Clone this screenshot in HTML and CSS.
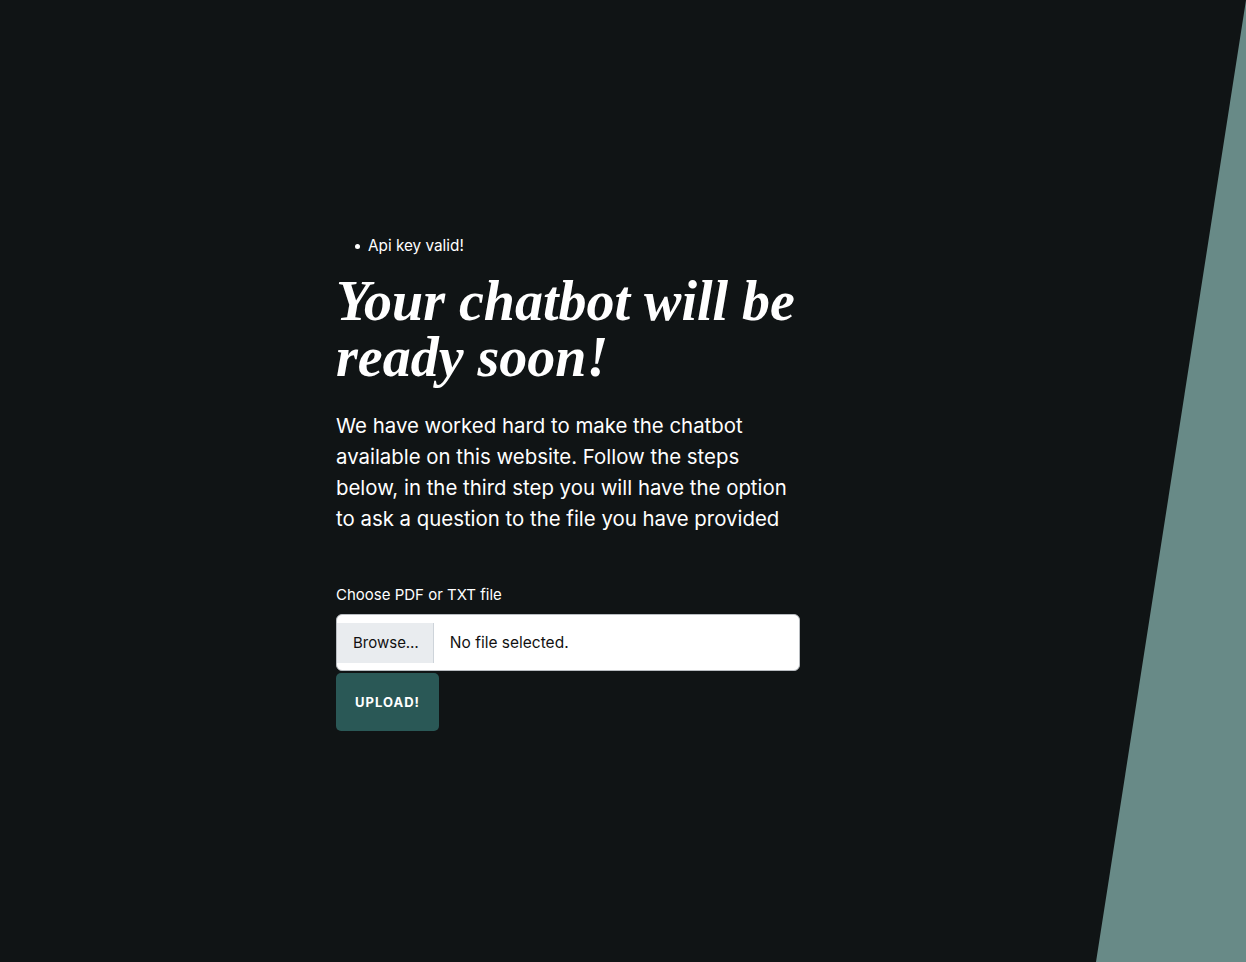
FILE: index.html
```html
<!DOCTYPE html>
<html lang="en">
<head>
<meta charset="utf-8">
<title>Chatbot</title>
<link rel="stylesheet" href="styles.css">
</head>
<body>
<div class="slash"></div>
<main class="content">
  <ul class="status">
    <li>Api key valid!</li>
  </ul>
  <h1 class="title">Your chatbot will be ready soon!</h1>
  <p class="lead">We have worked hard to make the chatbot available on this website. Follow the steps below, in the third step you will have the option to ask a question to the file you have provided</p>
  <form class="upload-form">
    <label class="label">Choose PDF or TXT file</label>
    <div class="file-input">
      <span class="browse">Browse…</span>
      <span class="file-name">No file selected.</span>
    </div>
    <button type="button" class="upload-btn">UPLOAD!</button>
  </form>
</main>
</body>
</html>
```
FILE: styles.css
```css
html, body {
  margin: 0;
  padding: 0;
  height: 100%;
}
body {
  background: #101415;
  color: #ffffff;
  font-family: Inter, "Noto Sans", sans-serif;
  overflow: hidden;
  position: relative;
}
.slash {
  position: absolute;
  inset: 0;
  background: #688a87;
  clip-path: polygon(1246px 0, 1246px 962px, 1096px 962px);
}
.content {
  position: relative;
  width: 464px;
  margin-left: 336px;
  padding-top: 236px;
}
.status {
  margin: 0;
  padding-left: 32px;
  font-size: 15.3px;
  line-height: 20px;
  list-style: none;
}
.status li {
  position: relative;
}
.status li::before {
  content: "";
  position: absolute;
  left: -13px;
  top: 8px;
  width: 5px;
  height: 5px;
  border-radius: 50%;
  background: #fff;
}
.title {
  font-family: "Liberation Serif", serif;
  font-style: italic;
  font-weight: 700;
  font-size: 56px;
  line-height: 56px;
  margin: 17px 0 25px;
}
.lead {
  font-size: 20.4px;
  line-height: 31px;
  margin: 0 0 51px;
}
.upload-form {
  display: flex;
  flex-direction: column;
}
.label {
  font-size: 15px;
  line-height: 20px;
  margin-bottom: 9px;
}
.file-input {
  display: flex;
  align-items: center;
  height: 55px;
  background: #fff;
  border: 1px solid #b8bcc0;
  border-radius: 6px;
  color: #111;
  font-size: 15.5px;
}
.browse {
  display: flex;
  align-items: center;
  height: 40px;
  padding: 0 14px 0 16px;
  background: #e9ecef;
  border-right: 1px solid #ced4da;
  font-size: 15px;
}
.file-name {
  padding-left: 16px;
}
.upload-btn {
  align-self: flex-start;
  margin-top: 2px;
  width: 103px;
  height: 58px;
  border: 0;
  border-radius: 5px;
  background: #2a5856;
  color: #fff;
  font-family: Inter, sans-serif;
  font-weight: 700;
  font-size: 13px;
  letter-spacing: 1px;
}
```
